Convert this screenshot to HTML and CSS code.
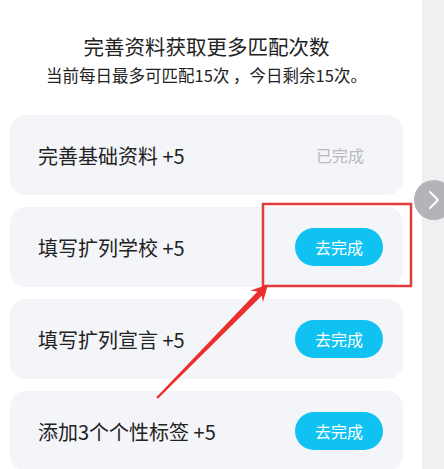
FILE: index.html
```html
<!DOCTYPE html>
<html lang="zh-CN">
<head>
    <meta charset="UTF-8">
    <meta name="viewport" content="width=device-width, initial-scale=1.0">
    <title>完善资料</title>
    <link rel="stylesheet" href="styles.css">
</head>
<body>
    <div class="page">
        <div class="panel">
            <!-- Header -->
            <div class="intro">
                <h1>完善资料获取更多匹配次数</h1>
                <p>当前每日最多可匹配15次 ，今日剩余15次。</p>
            </div>

            <!-- Task list -->
            <div class="task-list">
                <div class="task">
                    <span class="task-name">完善基础资料 +5</span>
                    <span class="task-done">已完成</span>
                </div>
                <div class="task">
                    <span class="task-name">填写扩列学校 +5</span>
                    <button class="task-btn">去完成</button>
                </div>
                <div class="task">
                    <span class="task-name">填写扩列宣言 +5</span>
                    <button class="task-btn">去完成</button>
                </div>
                <div class="task">
                    <span class="task-name">添加3个个性标签 +5</span>
                    <button class="task-btn">去完成</button>
                </div>
            </div>
        </div>

        <div class="side"></div>

        <!-- floating next button -->
        <div class="next-btn">
            <svg width="40" height="40" viewBox="0 0 40 40">
                <path d="M16 12 L24 20 L16 28" fill="none" stroke="#fff" stroke-width="2" stroke-linecap="round" stroke-linejoin="round"/>
            </svg>
        </div>

        <!-- markup layer -->
        <svg class="marks" width="444" height="469" viewBox="0 0 444 469">
            <rect x="263" y="204" width="148" height="82" fill="none" stroke="#e23b3b" stroke-width="2.5"/>
            <polygon fill="#ec2f2c" points="156.3,397.3 257.5,291.5 250.5,290.5 268,284.5 263,302 261.7,295.7 157.9,398.7"/>
        </svg>
    </div>
</body>
</html>
```

FILE: styles.css
```css
* { box-sizing: border-box; margin: 0; padding: 0; }

body {
    font-family: "Noto Sans CJK SC", "Noto Sans", sans-serif;
    background: #f0f0f2;
}

.page {
    position: relative;
    width: 444px;
    height: 469px;
    overflow: hidden;
    display: flex;
}

.panel {
    width: 422px;
    background: #fff;
    padding: 0 19px 0 10px;
}

.side {
    flex: 1;
    background: #f0f0f2;
}

/* header */
.intro {
    text-align: center;
    padding-top: 32px;
    height: 115px;
}

.intro h1 {
    font-size: 20.5px;
    font-weight: 400;
    color: #222;
    line-height: 28px;
}

.intro p {
    font-size: 16.5px;
    color: #222;
    line-height: 24px;
    margin-top: 3px;
}

/* tasks */
.task-list {
    display: flex;
    flex-direction: column;
    gap: 12px;
}

.task {
    height: 80px;
    background: #f4f5f9;
    border-radius: 16px;
    display: flex;
    align-items: center;
    justify-content: space-between;
    padding: 0 20px 0 28px;
}

.task-name {
    font-size: 20px;
    color: #222;
}

.task-done {
    font-size: 16px;
    color: #b9bac0;
    margin-right: 19px;
}

.task-btn {
    width: 88px;
    height: 38px;
    border: none;
    border-radius: 19px;
    background: #10c2f2;
    color: #fff;
    font-family: inherit;
    font-size: 16px;
}

.next-btn {
    position: absolute;
    left: 414px;
    top: 180px;
    width: 40px;
    height: 40px;
    border-radius: 50%;
    background: #b3b3b8;
}

.next-btn svg {
    display: block;
}

.marks {
    position: absolute;
    left: 0;
    top: 0;
    pointer-events: none;
}
```
